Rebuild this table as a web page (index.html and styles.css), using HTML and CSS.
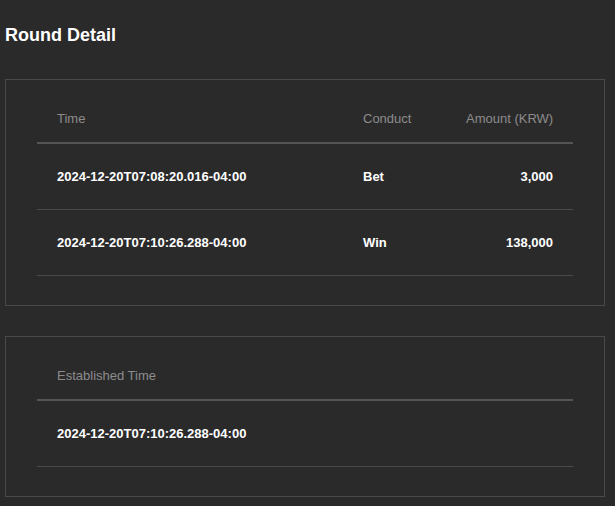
FILE: index.html
```html
<!DOCTYPE html>
<html lang="en">
<head>
<meta charset="utf-8">
<title>Round Detail</title>
<link rel="stylesheet" href="styles.css">
</head>
<body>
<main class="page">
  <h2 class="title">Round Detail</h2>
  <section class="card">
    <table class="grid">
      <colgroup>
        <col class="c-time">
        <col class="c-conduct">
        <col class="c-amount">
      </colgroup>
      <thead>
        <tr>
          <th>Time</th>
          <th>Conduct</th>
          <th class="right">Amount (KRW)</th>
        </tr>
      </thead>
      <tbody>
        <tr>
          <td class="date">2024-12-20T07:08:20.016-04:00</td>
          <td>Bet</td>
          <td class="right">3,000</td>
        </tr>
        <tr>
          <td class="date">2024-12-20T07:10:26.288-04:00</td>
          <td>Win</td>
          <td class="right">138,000</td>
        </tr>
      </tbody>
    </table>
  </section>
  <section class="card">
    <table class="grid">
      <thead>
        <tr><th>Established Time</th></tr>
      </thead>
      <tbody>
        <tr><td class="date">2024-12-20T07:10:26.288-04:00</td></tr>
      </tbody>
    </table>
  </section>
</main>
</body>
</html>
```

FILE: styles.css
```css
html, body {
  margin: 0;
  padding: 0;
  background: #2b2a2b;
}
body {
  font-family: "Liberation Sans", Arial, sans-serif;
  color: #ffffff;
}
.page {
  padding: 25px 5px 0 5px;
  display: flex;
  flex-direction: column;
  gap: 30px;
  width: 600px;
}
.title {
  margin: 0 0 3px 0;
  font-size: 18px;
  line-height: 21px;
  font-weight: bold;
  color: #ffffff;
}
.card {
  border: 1px solid #4a4a4a;
  padding: 15px 31px 29px 31px;
}
.grid {
  width: 100%;
  border-collapse: collapse;
  table-layout: fixed;
}
.c-time { width: 306px; }
.c-conduct { width: 103px; }
.c-amount { width: 127px; }
.grid th {
  height: 47px;
  padding: 0 20px;
  text-align: left;
  font-weight: normal;
  font-size: 13px;
  color: #8c8c8c;
  border-bottom: 2px solid #555555;
  vertical-align: middle;
  white-space: nowrap;
}
.grid td {
  height: 65px;
  padding: 0 20px;
  font-size: 13px;
  font-weight: bold;
  color: #ffffff;
  border-bottom: 1px solid #4a4a4a;
  vertical-align: middle;
  white-space: nowrap;
}
.grid .right {
  text-align: right;
}
```
